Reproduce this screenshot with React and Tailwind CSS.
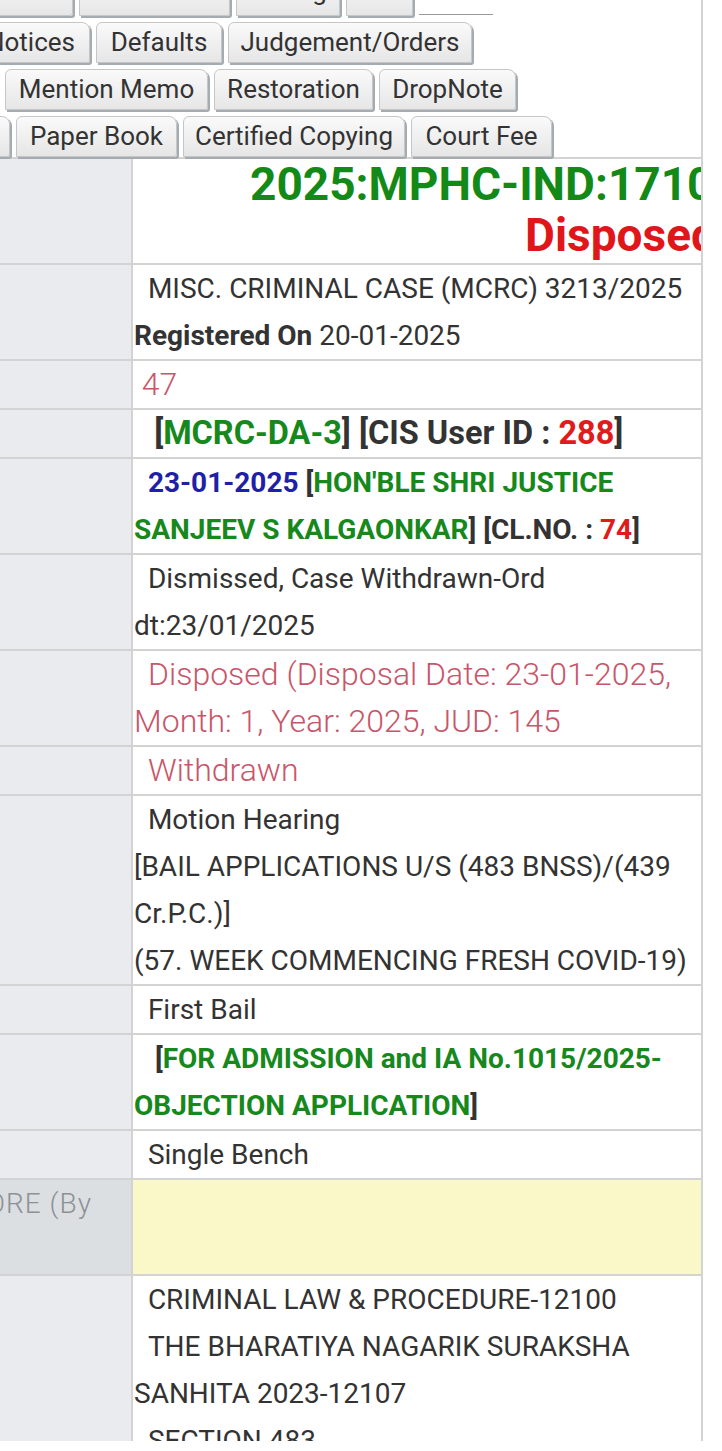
import React from 'react';

// tab strip rows: each row starts left of the viewport (page is scrolled sideways)
const TAB_ROWS = [
  {
    offset: 'ml-[-40px] mt-[-25px]',
    text: 'pb-[9px]',
    tabs: [
      { label: 'Parties', w: 'w-[113px]' },
      { label: 'Case Status', w: 'w-[151px]' },
      { label: 'Listing', w: 'w-[104px]' },
      { label: 'IAs', w: 'w-[67px]' },
    ],
    underline: true,
  },
  {
    offset: 'ml-[-18px]',
    tabs: [
      { label: 'Notices', w: 'w-[108px] justify-end pr-[14px]' },
      { label: 'Defaults', w: 'w-[126px]' },
      { label: 'Judgement/Orders', w: 'w-[244px]' },
    ],
  },
  {
    offset: 'ml-[5px]',
    tabs: [
      { label: 'Mention Memo', w: 'w-[203px]' },
      { label: 'Restoration', w: 'w-[159px]' },
      { label: 'DropNote', w: 'w-[137px]' },
    ],
  },
  {
    offset: 'ml-[-120px]',
    tabs: [
      { label: 'Caveat', w: 'w-[130px]' },
      { label: 'Paper Book', w: 'w-[161px]' },
      { label: 'Certified Copying', w: 'w-[222px]' },
      { label: 'Court Fee', w: 'w-[141px]' },
    ],
  },
];

function Tab({ label, w, text }) {
  return (
    <div
      className={`${w} h-[41px] shrink-0 flex items-center justify-center whitespace-nowrap text-[26px] text-[#333] border border-[#c6c6c6] rounded-tl-[6px] rounded-tr-[8px] rounded-br-[3px] shadow-[2px_2px_0_0_#a4acb1] bg-linear-to-b from-[#fafafa] to-[#e6e6e6] ${text || ''}`}
    >
      {label}
    </div>
  );
}

function Tabs() {
  return (
    <div className="flex flex-col gap-[6px]">
      {TAB_ROWS.map((row, i) => (
        <div key={i} className={`flex items-end gap-[6px] ${row.offset}`}>
          {row.tabs.map((t) => (
            <Tab key={t.label} label={t.label} w={t.w} text={row.text} />
          ))}
          {row.underline && <div className="w-[74px] mb-[1px] border-b border-[#9a9a9a]" />}
        </div>
      ))}
    </div>
  );
}

const G = ({ children }) => <span className="text-[#16881c]">{children}</span>;
const R = ({ children }) => <span className="text-[#e01b1b]">{children}</span>;
const B = ({ children }) => <span className="text-[#1f1fa8]">{children}</span>;
const Indent = () => <span className="inline-block w-[14px]" />;

function Row({ children, cls = 'text-[28px]', left = null, leftCls = 'bg-[#e9ebee]' }) {
  return (
    <div className="grid grid-cols-[133px_1fr] border-b-2 border-[#d3d3d3]">
      <div className={`border-r-2 border-[#d3d3d3] overflow-hidden ${leftCls}`}>{left}</div>
      <div className={`pl-[1px] overflow-hidden whitespace-nowrap leading-[47px] ${cls}`}>
        {children}
      </div>
    </div>
  );
}

const sp2 = '\u00a0\u00a0';
const sp3 = '\u00a0\u00a0\u00a0';
const light = 'font-light text-[32px] text-[#c8566a]';

export default function App() {
  return (
    <div className="w-[722px] h-[1451px] bg-white overflow-hidden font-['Roboto','Liberation_Sans',sans-serif] text-[#333]">
      <div className="w-[703px] h-[1441px] overflow-hidden border-r-2 border-[#d3d3d3]">
        <Tabs />
        <div className="border-t-2 border-[#d3d3d3]">
          {/* header */}
          <div className="grid grid-cols-[133px_1fr] border-b-2 border-[#d3d3d3]">
            <div className="border-r-2 border-[#d3d3d3] bg-[#e9ebee]" />
            <div className="h-[104px] overflow-hidden whitespace-nowrap font-bold text-[46px] leading-[51px]">
              <div className="pl-[117px] text-[#138a17]">2025:MPHC-IND:17106</div>
              <div className="pl-[392px] text-[#e0161b]">Disposed</div>
            </div>
          </div>

          <Row>
            {sp2}MISC. CRIMINAL CASE (MCRC) 3213/2025
            <br />
            <span className="font-bold">Registered On</span> 20-01-2025
          </Row>

          <Row cls={light}>{'\u00a0'}47</Row>

          <Row cls="font-bold text-[32.5px] pl-[5px]">
            {sp2}[<G>MCRC-DA-3</G>] [CIS User ID : <R>288</R>]
          </Row>

          <Row cls="font-bold text-[28px]">
            {sp2}<B>23-01-2025</B> [<G>HON'BLE SHRI JUSTICE</G>
            <br />
            <G>SANJEEV S KALGAONKAR</G>] [CL.NO. : <R>74</R>]
          </Row>

          <Row>
            {sp2}Dismissed, Case Withdrawn-Ord
            <br />
            dt:23/01/2025
          </Row>

          <Row cls={light}>
            <Indent />Disposed (Disposal Date: 23-01-2025,
            <br />
            Month: 1, Year: 2025, JUD: 145
          </Row>

          <Row cls={light}>
            <Indent />Withdrawn
          </Row>

          <Row>
            {sp2}Motion Hearing
            <br />
            [BAIL APPLICATIONS U/S (483 BNSS)/(439
            <br />
            Cr.P.C.)]
            <br />
            (57. WEEK COMMENCING FRESH COVID-19)
          </Row>

          <Row>{sp2}First Bail</Row>

          <Row cls="font-bold text-[28px]">
            {sp3}[<G>FOR ADMISSION and IA No.1015/2025-</G>
            <br />
            <G>OBJECTION APPLICATION</G>]
          </Row>

          <Row>{sp2}Single Bench</Row>

          <Row
            cls="bg-[#faf8c9] h-[94px]"
            leftCls="bg-[#dcdfe2]"
            left={
              <div className="flex justify-end pr-[39px] whitespace-nowrap font-light text-[28px] tracking-[1px] leading-[47px] text-[#8c9196]">
                BEFORE (By
              </div>
            }
          />

          <Row>
            {sp2}CRIMINAL LAW &amp; PROCEDURE-12100
            <br />
            {sp2}THE BHARATIYA NAGARIK SURAKSHA
            <br />
            SANHITA 2023-12107
            <br />
            {sp2}SECTION 483
          </Row>
        </div>
      </div>
    </div>
  );
}
